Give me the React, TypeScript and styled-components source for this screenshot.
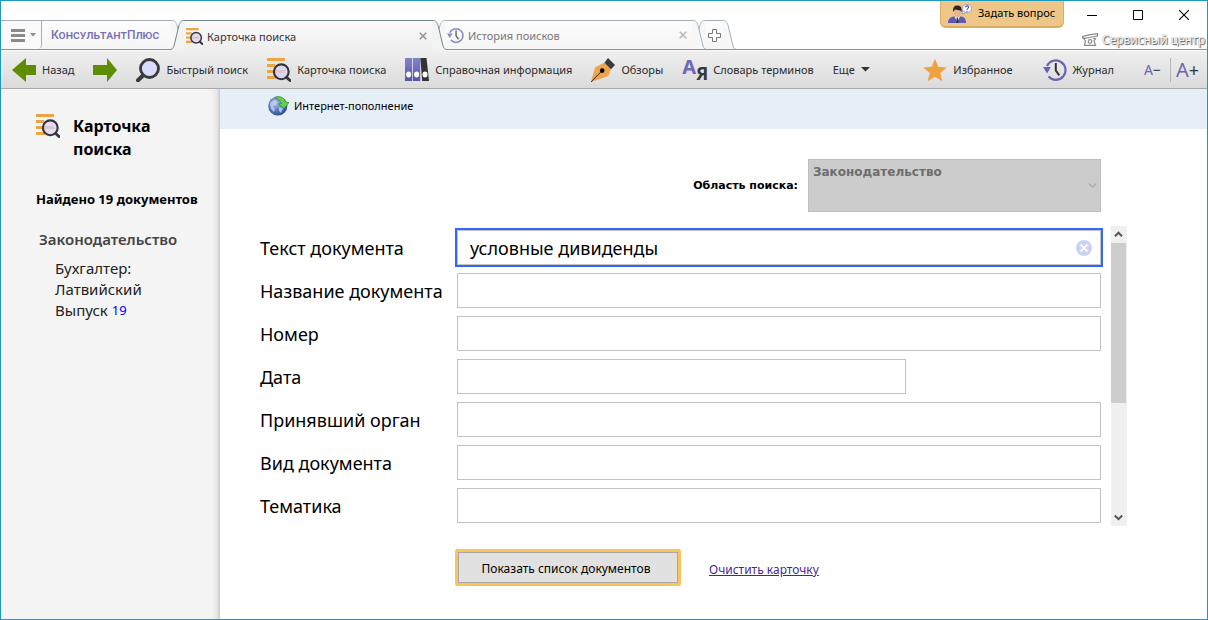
import React from "react";
import styled, { createGlobalStyle, css } from "styled-components";

const ui = `"Noto Sans", "Open Sans", sans-serif`;

const GlobalStyle = createGlobalStyle`
  *, *::before, *::after { box-sizing: border-box; }
  body { margin: 0; background: #fff; font-family: ${ui}; font-size: 11px; color: #000; }
  button, input, select { font: inherit; color: inherit; border-radius: 0; }
  button { padding: 0; border: 0; background: none; cursor: pointer; }
  svg { display: block; flex: none; }
`;

/* ---------- window ---------- */

const Window = styled.div`
  min-height: 100vh;
  display: flex;
  flex-direction: column;
  border: 1px solid #1b9bb9;
`;

const Header = styled.header`
  height: 50px;
  display: flex;
  justify-content: space-between;
  box-shadow: inset 0 -1px #fafafa, inset 0 -2px #8495a2;
`;

const TabStrip = styled.div`
  display: flex;
  align-items: flex-start;
  padding-top: 19px;
  min-width: 0;
  isolation: isolate;
`;

const tabFill = "#f7f7f7";

const Tab = styled.div<{ $active?: boolean; $width: number; $level: number }>`
  position: relative;
  z-index: ${(p) => p.$level};
  display: flex;
  width: ${(p) => p.$width}px;
  height: ${(p) => (p.$active ? 31 : 29)}px;
  & + & { margin-left: -14px; }
`;

const TabBody = styled.div<{ $active?: boolean }>`
  flex: 1;
  min-width: 0;
  display: flex;
  align-items: center;
  border-top: 1px solid ${(p) => (p.$active ? "#74858f" : "#a3b0ba")};
  background: ${(p) => (p.$active ? "linear-gradient(#fbfbfb, #eeeeee)" : "linear-gradient(#fdfdfd, #f5f5f5)")};
`;

const TabLink = styled.button<{ $active?: boolean }>`
  flex: 1;
  min-width: 0;
  display: flex;
  align-items: center;
  gap: 4px;
  padding-left: 1px;
  text-align: left;
  white-space: nowrap;
  color: ${(p) => (p.$active ? "#333" : "#777")};
`;

const MenuButton = styled.button`
  width: 41px;
  height: 29px;
  padding-left: 10px;
  display: flex;
  align-items: center;
  gap: 5px;
  border: solid #a3b0ba;
  border-width: 1px 1px 0 0;
  background: #fafafa;
  border-bottom-right-radius: 4px;
`;

const Brand = styled.span`
  flex: 1;
  padding-left: 9px;
  font-family: Roboto, sans-serif;
  font-size: 12px;
  font-weight: 500;
  font-variant: small-caps;
  line-height: 20px;
  white-space: nowrap;
  color: #7871b4;
`;

const HeaderSide = styled.div`
  display: flex;
  flex-direction: column;
  align-items: flex-end;
`;

const WindowRow = styled.div`
  display: flex;
  height: 28px;
`;

const AskButton = styled.button`
  width: 124px;
  height: 27px;
  margin-right: 5px;
  padding: 0 0 1px 7px;
  display: flex;
  align-items: center;
  gap: 6px;
  line-height: 20px;
  white-space: nowrap;
  background: #eec788;
  border: solid #d9ae62;
  border-width: 0 1px 2px;
  border-radius: 0 0 6px 6px;
`;

const WindowButton = styled.button`
  width: 46px;
  display: grid;
  place-items: center;
`;

const ServiceLink = styled.a`
  display: flex;
  align-items: center;
  gap: 4px;
  padding-right: 2px;
  font-size: 12px;
  line-height: 21px;
  text-decoration: none;
  white-space: nowrap;
  color: #f4f4f4;
  text-shadow: 1px 1px 1px #555, 0 0 1px #888;
`;

/* ---------- toolbar ---------- */

const Toolbar = styled.nav`
  height: 38px;
  padding: 0 8px 0 11px;
  display: flex;
  align-items: center;
  gap: 19px;
  background: linear-gradient(#efefef, #dbdbdb);
  border-bottom: 1px solid #a9a9a9;
`;

const ToolButton = styled.button`
  height: 37px;
  display: flex;
  align-items: center;
  gap: 6px;
  white-space: nowrap;
  color: #2b2b2b;
`;

const Spacer = styled.div`
  flex: 1;
`;

const ToolbarEnd = styled.div`
  display: flex;
  align-items: center;
  gap: 30px;
  margin-left: auto;
`;

const FontButtons = styled.div`
  display: flex;
  align-items: center;
`;

const FontButton = styled.button<{ $large?: boolean }>`
  height: 24px;
  display: flex;
  align-items: center;
  font-size: ${(p) => (p.$large ? 20 : 14)}px;
  line-height: 24px;
  color: #6a66b3;
  ${(p) =>
    p.$large
      ? css`
          padding-left: 5px;
          border-left: 1px solid #b5b5b5;
        `
      : css`
          padding-right: 9px;
        `}
`;

const Sign = styled.span<{ $large?: boolean }>`
  font-size: ${(p) => (p.$large ? 18 : 14)}px;
  color: #333;
`;

/* ---------- body ---------- */

const Body = styled.div`
  flex: 1;
  display: flex;
`;

const Sidebar = styled.aside`
  width: 219px;
  flex: none;
  padding: 25px 8px 16px 35px;
  background: linear-gradient(to left, #c9c9c9, #e6e6e6 3px, #f4f4f4 9px);
`;

const SideTitle = styled.h1`
  display: flex;
  gap: 13px;
  margin: 0;
  font-size: 16px;
  line-height: 23px;
  span { width: 100px; padding-top: 1px; }
`;

const Found = styled.p`
  margin: 28px 0 0;
  font-size: 13px;
  font-weight: 700;
  line-height: 20px;
  white-space: nowrap;
`;

const GroupTitle = styled.h2`
  margin: 20px 0 8px;
  padding-left: 3px;
  font-size: 15px;
  font-weight: 600;
  line-height: 21px;
  color: #444;
`;

const GroupItem = styled.div`
  width: 120px;
  margin-left: 19px;
  font-size: 15px;
  line-height: 21px;
  color: #222;
`;

const IssueRow = styled.div`
  display: flex;
  align-items: center;
  gap: 4px;
  a { font-size: 13px; color: #00f; text-decoration: none; }
`;

const Main = styled.main`
  flex: 1;
  min-width: 0;
`;

const Banner = styled.div`
  height: 40px;
  padding: 7px 48px;
  background: #e6eef8;
`;

const BannerButton = styled.button`
  display: flex;
  align-items: center;
  gap: 5px;
  line-height: 20px;
`;

const Form = styled.form`
  padding: 30px 80px 24px 40px;
`;

const ScopeRow = styled.div`
  display: flex;
  justify-content: flex-end;
  align-items: center;
  gap: 10px;
  padding-right: 26px;
  font-family: "DejaVu Sans", sans-serif;
  font-weight: 700;
`;

const ScopeBox = styled.div`
  display: grid;
  width: 293px;
  > * { grid-area: 1 / 1; }
  > svg { place-self: center end; margin-right: 4px; pointer-events: none; }
`;

const ScopeSelect = styled.select`
  appearance: none;
  height: 53px;
  padding: 2px 16px 30px 4px;
  border: 1px solid #bfbfbf;
  background: #ccc;
  color: #6d6d6d;
  font-size: 12px;
  opacity: 1;
`;

const ScrollPane = styled.div`
  display: flex;
  gap: 10px;
  margin-top: 14px;
`;

const Fields = styled.div`
  flex: 1;
  min-width: 0;
  padding: 4px 0 3px;
  display: flex;
  flex-direction: column;
  gap: 8px;
`;

const Field = styled.div`
  display: grid;
  grid-template-columns: 197px 1fr;
  align-items: center;
  font-size: 18px;
`;

const InputBox = styled.div`
  display: grid;
  > * { grid-area: 1 / 1; }
  > button { place-self: center end; margin-right: 9px; }
`;

const TextInput = styled.input<{ $short?: boolean; $focused?: boolean }>`
  width: ${(p) => (p.$short ? "449px" : "100%")};
  max-width: 100%;
  height: 35px;
  padding: 0 12px;
  border: 1px solid #c2c2c2;
  background: #fff;
  outline: none;
  ${(p) =>
    p.$focused &&
    css`
      outline: 2px solid #3366ff;
    `}
`;

const Scrollbar = styled.div`
  width: 16px;
  display: flex;
  flex-direction: column;
  background: #f0f0f0;
`;

const ScrollButton = styled.button`
  height: 17px;
  padding-right: 1px;
  display: grid;
  place-items: center;
`;

const Thumb = styled.div`
  height: 160px;
  margin: 0 1px 0 0;
  background: #cdcdcd;
`;

const Actions = styled.div`
  display: flex;
  align-items: center;
  gap: 28px;
  margin: 23px 0 0 195px;
  font-size: 12px;
`;

const Submit = styled.button`
  width: 226px;
  height: 37px;
  padding: 1px 4px 0 0;
  border: 3px solid #fdc25c;
  border-radius: 2px;
  background: #e1e1e1;
  box-shadow: inset 0 0 0 1px #a8a8a8;
`;

const ClearLink = styled.a`
  padding-top: 4px;
  color: #4a1fa0;
`;

/* ---------- icons ---------- */

const TabEdge = ({ side, active }: { side: "left" | "right"; active?: boolean }) => {
  const h = active ? 31 : 29;
  return (
    <svg width="14" height={h} viewBox={`0 0 14 ${h}`} aria-hidden="true">
      <g transform={side === "left" ? "translate(14 0) scale(-1 1)" : undefined}>
        <path
          d={`M0 .5H1.500C4.500 .5 5.500 3.500 6.500 7L10.500 24C11.200 27 12 28.500 14 29.500V${h}H0Z`}
          fill={active ? "#f3f3f3" : tabFill}
        />
        <path
          d="M0 .5H1.500C4.500 .5 5.500 3.500 6.500 7L10.500 24C11.200 27 12 28.500 14 29.500"
          fill="none"
          stroke={active ? "#74858f" : "#a3b0ba"}
        />
      </g>
    </svg>
  );
};

const ArrowIcon = ({ forward }: { forward?: boolean }) => (
  <svg width="24" height="24" viewBox="0 0 24 24" aria-hidden="true">
    <path
      d={forward ? "M24 12 14 0V7H0V17H14V24Z" : "M0 12 14 0V7H24V17H14V24Z"}
      fill="#5f8d00"
    />
  </svg>
);

const LensIcon = () => (
  <svg width="24" height="24" viewBox="0 0 24 24" aria-hidden="true">
    <path d="M7 17.500 2 22.300" stroke="#3a3a3a" strokeWidth="4" strokeLinecap="round" />
    <circle cx="13.500" cy="10.500" r="9" fill="#dadaff" stroke="#3a3a3a" strokeWidth="2.800" />
  </svg>
);

const CardIcon = ({ size = 24 }: { size?: number }) => (
  <svg width={size} height={size} viewBox="0 0 24 24" aria-hidden="true">
    <path d="M0 0H18V3H0ZM0 6H8V9H0ZM0 12H18V15H0ZM0 18H9V21H0Z" fill="#eda544" />
    <circle cx="14.300" cy="13.800" r="7.400" fill="#d8d4ff" fillOpacity=".72" stroke="#35353a" strokeWidth="2.100" />
    <path d="M19.700 19.400 23 22.600" stroke="#35353a" strokeWidth="2.800" strokeLinecap="round" />
  </svg>
);

const BindersIcon = () => (
  <svg width="24" height="24" viewBox="0 0 24 24" aria-hidden="true">
    <defs>
      <linearGradient id="binder" x1="0" y1="0" x2="0" y2="1">
        <stop offset="0" stopColor="#8383cb" />
        <stop offset="1" stopColor="#5655ab" />
      </linearGradient>
    </defs>
    <rect width="7.200" height="23" fill="url(#binder)" />
    <rect x="8" width="7.200" height="23" fill="url(#binder)" />
    <path d="M15.300 0H21.500L24 23H17.200Z" fill="#333" />
    <ellipse cx="3.600" cy="16.500" rx="2.500" ry="3" fill="#fff" />
    <ellipse cx="11.600" cy="16.500" rx="2.500" ry="3" fill="#fff" />
    <ellipse cx="20" cy="16.500" rx="2.500" ry="3" fill="#fff" />
  </svg>
);

const PenIcon = () => (
  <svg width="24" height="24" viewBox="0 0 24 24" aria-hidden="true">
    <path d="M0 24 4 9.500 13.500 4.500 20 11 17.500 18Z" fill="#f0a447" />
    <path d="M13.500 4.800 17 0 24 7 20 11.200Z" fill="#3a3a3a" />
    <path d="M0 24 11 12.800" stroke="#222" strokeWidth=".9" />
    <circle cx="11.200" cy="12.600" r="2.300" fill="#000" />
  </svg>
);

/* The two letters of the glossary icon, the second one set lower. */
const GlossaryIcon = styled.span`
  display: flex;
  align-items: flex-start;
  width: 25px;
  height: 24px;
  font-weight: 700;
  font-size: 20px;
  line-height: 24px;
  i { font-style: normal; }
  i:first-child { color: #6d69b6; margin-top: -3px; }
  i:last-child { color: #383838; margin-top: 3px; font-size: 18px; }
`;

const StarIcon = () => (
  <svg width="24" height="24" viewBox="0 0 24 24" aria-hidden="true">
    <path d="M12 .8 15.300 8.700 23.800 9.400 17.300 15 19.300 23.300 12 18.800 4.700 23.300 6.700 15 .2 9.400 8.700 8.700Z" fill="#f0a142" />
  </svg>
);

const HistoryIcon = ({ size = 24, pale }: { size?: number; pale?: boolean }) => (
  <svg width={size} height={size} viewBox="0 0 24 24" aria-hidden="true" opacity={pale ? 0.75 : 1}>
    <path d="M4 8A9.700 9.700 0 1 1 5.500 18.500" fill="none" stroke="#6764b4" strokeWidth="2.200" />
    <path d="M0 9H8L4 15.500Z" fill="#6764b4" />
    <path d="M12.800 5V12.500L16.300 17.300" fill="none" stroke="#333" strokeWidth="2" />
  </svg>
);

const GlobeIcon = () => (
  <svg width="21" height="20" viewBox="0 0 21 20" aria-hidden="true">
    <defs>
      <radialGradient id="globe" cx=".4" cy=".35" r=".7">
        <stop offset="0" stopColor="#a9bfe6" />
        <stop offset=".6" stopColor="#5475bd" />
        <stop offset="1" stopColor="#2b4486" />
      </radialGradient>
    </defs>
    <circle cx="9.800" cy="10" r="9.600" fill="url(#globe)" />
    <path d="M2 7 6 4 9 5 8 9 5 10 7 13 6 16 3 13ZM11 11 15 12 13 17 11 15Z" fill="#c8d6ee" opacity=".75" />
    <path d="M6.500 1.500C11 -.5 16 1 17.500 6L21 6.500 16 12.500 10.500 8 13.500 7.500C12.500 4.500 10 3 6.500 1.500Z" fill="#63d04e" stroke="#2c8a2c" strokeWidth=".7" />
  </svg>
);

const AskIcon = () => (
  <svg width="24" height="19" viewBox="0 0 24 19" aria-hidden="true">
    <path d="M0 19C0 14.500 3 13 6 12.500H13C16 13 18 14.500 18 19Z" fill="#5a59b4" />
    <path d="M6.500 12.500H12L9.300 18Z" fill="#fff" />
    <path d="M8.700 13.500H10L10.400 19H8.200Z" fill="#333" />
    <ellipse cx="9.300" cy="8" rx="3.600" ry="4.800" fill="#e9b58c" />
    <path d="M5.200 8C4.500 3 6.500 1.500 9.500 1.500 12.500 1.500 14.300 3.500 13.500 8L12.300 6.500 7 5.500Z" fill="#2d2523" />
    <path d="M15 6.500 14 10 18 8.500Z" fill="#fff" stroke="#8d8cc4" strokeWidth=".8" />
    <ellipse cx="19" cy="4.500" rx="4.600" ry="4.200" fill="#fff" stroke="#8d8cc4" strokeWidth=".8" />
    <path d="M17.400 3.200C17.600 1.400 20.800 1.400 20.600 3.300 20.500 4.300 19 4.400 19 5.700M19 6.700V7.700" fill="none" stroke="#4a49a0" strokeWidth="1.100" />
  </svg>
);

const PhoneIcon = () => (
  <svg width="16" height="13" viewBox="0 0 16 13" aria-hidden="true">
    <g fill="none" stroke="#8b8b8b" strokeWidth="1.200">
      <path d="M.6 5V3.500L7 1.800 15.400 .7V3L10 4 4.500 5Z" />
      <path d="M4 5.500H1.500L3.500 8 2.500 12.300H13.500L12 8 13.500 5.500H11" />
      <circle cx="8" cy="8.500" r="1.800" />
    </g>
  </svg>
);

const CrossIcon = ({ color }: { color: string }) => (
  <svg width="8" height="8" viewBox="0 0 8 8" aria-hidden="true">
    <path d="M.7 .7 7.300 7.300M7.300 .7 .7 7.300" stroke={color} strokeWidth="1.600" />
  </svg>
);

const ChevronIcon = ({ up, color = "#555", thin }: { up?: boolean; color?: string; thin?: boolean }) => (
  <svg width="9" height="7" viewBox="0 0 9 7" aria-hidden="true">
    <path
      d={up ? "M1 5.200 4.500 1.700 8 5.200" : "M.8 1.500 4.500 5.200 8.200 1.500"}
      fill="none"
      stroke={color}
      strokeWidth={thin ? 1.2 : 2}
    />
  </svg>
);

const CloseTab = styled.button`
  width: 12px;
  height: 20px;
  margin-right: 3px;
  display: grid;
  place-items: center;
`;

/* ---------- data ---------- */

const tools = [
  { label: "Быстрый поиск", icon: <LensIcon /> },
  { label: "Карточка поиска", icon: <CardIcon /> },
  { label: "Справочная информация", icon: <BindersIcon /> },
  { label: "Обзоры", icon: <PenIcon /> },
  {
    label: "Словарь терминов",
    icon: (
      <GlossaryIcon aria-hidden="true">
        <i>А</i>
        <i>Я</i>
      </GlossaryIcon>
    ),
  },
];

const fields = [
  { id: "text", label: "Текст документа", value: "условные дивиденды" },
  { id: "title", label: "Название документа" },
  { id: "number", label: "Номер" },
  { id: "date", label: "Дата", short: true },
  { id: "issuer", label: "Принявший орган" },
  { id: "kind", label: "Вид документа" },
  { id: "subject", label: "Тематика" },
];

export default function App() {
  return (
    <Window>
      <GlobalStyle />
      <Header>
        <TabStrip>
          <Tab $width={184} $level={1}>
            <MenuButton type="button" aria-label="Меню">
              <svg width="14" height="13" viewBox="0 0 14 13" aria-hidden="true">
                <path d="M0 0H14V3H0ZM0 5H14V8H0ZM0 10H14V13H0Z" fill="#8b8b8b" />
              </svg>
              <svg width="6" height="4" viewBox="0 0 6 4" aria-hidden="true">
                <path d="M0 0H6L3 3.500Z" fill="#8b8b8b" />
              </svg>
            </MenuButton>
            <TabBody>
              <Brand>КонсультантПлюс</Brand>
            </TabBody>
            <TabEdge side="right" />
          </Tab>
          <Tab $active $width={275} $level={3}>
            <TabEdge side="left" active />
            <TabBody $active>
              <TabLink type="button" $active>
                <CardIcon size={17} />
                Карточка поиска
              </TabLink>
              <CloseTab type="button" aria-label="Закрыть вкладку">
                <CrossIcon color="#8f979e" />
              </CloseTab>
            </TabBody>
            <TabEdge side="right" active />
          </Tab>
          <Tab $width={274} $level={2}>
            <TabEdge side="left" />
            <TabBody>
              <TabLink type="button">
                <HistoryIcon size={17} pale />
                История поисков
              </TabLink>
              <CloseTab type="button" aria-label="Закрыть вкладку">
                <CrossIcon color="#b4babf" />
              </CloseTab>
            </TabBody>
            <TabEdge side="right" />
          </Tab>
          <Tab $width={44} $level={1}>
            <TabEdge side="left" />
            <TabBody>
              <button type="button" aria-label="Новая вкладка">
                <svg width="15" height="13" viewBox="-2 0 15 13" aria-hidden="true">
                  <path d="M4.500 .5H8.500V4.500H12.500V8.500H8.500V12.500H4.500V8.500H.5V4.500H4.500Z" fill="#fff" stroke="#777" />
                </svg>
              </button>
            </TabBody>
            <TabEdge side="right" />
          </Tab>
        </TabStrip>
        <HeaderSide>
          <WindowRow>
            <AskButton type="button">
              <AskIcon />
              Задать вопрос
            </AskButton>
            <WindowButton type="button" aria-label="Свернуть">
              <svg width="10" height="10" viewBox="0 0 10 10"><path d="M0 5.500H10" stroke="#000" /></svg>
            </WindowButton>
            <WindowButton type="button" aria-label="Развернуть">
              <svg width="10" height="10" viewBox="0 0 10 10"><path d="M.5 .5H9.500V9.500H.5Z" fill="none" stroke="#000" /></svg>
            </WindowButton>
            <WindowButton type="button" aria-label="Закрыть">
              <svg width="10" height="10" viewBox="0 0 10 10"><path d="M0 0 10 10M10 0 0 10" stroke="#000" strokeWidth="1.100" /></svg>
            </WindowButton>
          </WindowRow>
          <ServiceLink href="#service">
            <PhoneIcon />
            Сервисный центр
          </ServiceLink>
        </HeaderSide>
      </Header>

      <Toolbar>
        <ToolButton type="button">
          <ArrowIcon />
          Назад
        </ToolButton>
        <ToolButton type="button" aria-label="Вперед">
          <ArrowIcon forward />
        </ToolButton>
        {tools.map((t) => (
          <ToolButton type="button" key={t.label}>
            {t.icon}
            {t.label}
          </ToolButton>
        ))}
        <ToolButton type="button">
          Еще
          <svg width="9" height="5" viewBox="0 0 9 5" aria-hidden="true">
            <path d="M0 0H9L4.500 4.500Z" fill="#333" />
          </svg>
        </ToolButton>
        <ToolbarEnd>
          <ToolButton type="button">
            <StarIcon />
            Избранное
          </ToolButton>
          <ToolButton type="button">
            <HistoryIcon />
            Журнал
          </ToolButton>
          <FontButtons>
            <FontButton type="button" aria-label="Уменьшить шрифт">
              А<Sign>−</Sign>
            </FontButton>
            <FontButton type="button" aria-label="Увеличить шрифт" $large>
              А<Sign $large>+</Sign>
            </FontButton>
          </FontButtons>
        </ToolbarEnd>
      </Toolbar>

      <Body>
        <Sidebar>
          <SideTitle>
            <CardIcon size={24} />
            <span>Карточка поиска</span>
          </SideTitle>
          <Found>Найдено 19 документов</Found>
          <GroupTitle>Законодательство</GroupTitle>
          <GroupItem>
            Бухгалтер: Латвийский
            <IssueRow>
              <span>Выпуск</span>
              <a href="#results">19</a>
            </IssueRow>
          </GroupItem>
        </Sidebar>
        <Main>
          <Banner>
            <BannerButton type="button">
              <GlobeIcon />
              Интернет-пополнение
            </BannerButton>
          </Banner>
          <Form onSubmit={(e) => e.preventDefault()}>
            <ScopeRow>
              <label htmlFor="scope">Область поиска:</label>
              <ScopeBox>
                <ScopeSelect id="scope" disabled>
                  <option>Законодательство</option>
                </ScopeSelect>
                <ChevronIcon color="#a8a8a8" thin />
              </ScopeBox>
            </ScopeRow>
            <ScrollPane>
              <Fields>
                {fields.map((f) => (
                  <Field key={f.id}>
                    <label htmlFor={f.id}>{f.label}</label>
                    <InputBox>
                      <TextInput id={f.id} type="text" defaultValue={f.value} $short={f.short} $focused={!!f.value} />
                      {f.value && (
                        <button type="button" aria-label="Очистить поле">
                          <svg width="16" height="16" viewBox="0 0 16 16" aria-hidden="true">
                            <circle cx="8" cy="8" r="8" fill="#ccd4f2" />
                            <path d="M4.500 4.500 11.500 11.500M11.500 4.500 4.500 11.500" stroke="#fff" strokeWidth="1.800" />
                          </svg>
                        </button>
                      )}
                    </InputBox>
                  </Field>
                ))}
              </Fields>
              <Scrollbar>
                <ScrollButton type="button" aria-label="Прокрутить вверх">
                  <ChevronIcon up />
                </ScrollButton>
                <Thumb />
                <Spacer />
                <ScrollButton type="button" aria-label="Прокрутить вниз">
                  <ChevronIcon />
                </ScrollButton>
              </Scrollbar>
            </ScrollPane>
            <Actions>
              <Submit type="submit">Показать список документов</Submit>
              <ClearLink href="#clear">Очистить карточку</ClearLink>
            </Actions>
          </Form>
        </Main>
      </Body>
    </Window>
  );
}
